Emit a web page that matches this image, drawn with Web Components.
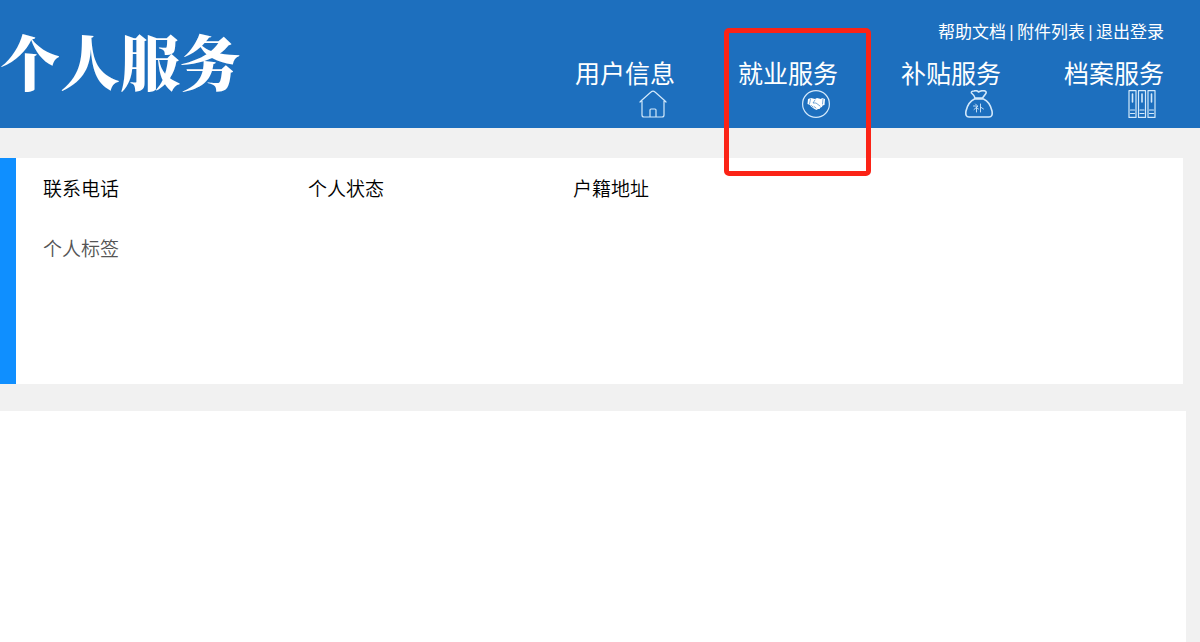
<!DOCTYPE html>
<html lang="zh-CN">
<head>
<meta charset="utf-8">
<meta name="viewport" content="width=device-width, initial-scale=1">
<title>个人服务</title>
<style>
body { margin: 0; background: #f1f1f1; color: #000; font-family: "Noto Sans CJK SC", sans-serif; }
</style>
</head>
<body>
<service-page>
  <service-header slot="header">
    <span slot="title">个人服务</span>
    <quick-links slot="links"></quick-links>
    <nav-item icon="home">用户信息</nav-item>
    <nav-item icon="hands" marked>就业服务</nav-item>
    <nav-item icon="bag">补贴服务</nav-item>
    <nav-item icon="files">档案服务</nav-item>
  </service-header>
  <profile-card>
    <profile-field>联系电话</profile-field>
    <profile-field>个人状态</profile-field>
    <profile-field>户籍地址</profile-field>
    <profile-field muted>个人标签</profile-field>
  </profile-card>
  <content-panel></content-panel>
</service-page>
<script>
function define(name, markup, setup) {
  const template = document.createElement('template');
  template.innerHTML = markup;
  customElements.define(name, class extends HTMLElement {
    constructor() {
      super();
      this.attachShadow({ mode: 'open' }).append(template.content.cloneNode(true));
    }
    connectedCallback() { if (setup) setup(this); }
  });
}

const icons = {
  home: '<path d="M1 12 L3 10 L12 2 Q14 0 16 2 L25 10 L27 12 M3 11 V25 Q3 27 5 27 H23 Q25 27 25 25 V11 M11 27 V20 Q11 19 12 19 H16 Q17 19 17 20 V27"/>',
  hands: '<circle cx="14" cy="14" r="13.4"/><path fill="#fff" stroke="none" d="M6 9 L9 8 L13 9 L15 8 L19 9 L20 8 L23 9 L22.5 15 L20.5 15.5 L20 17 L18.5 17.5 L17.5 19 L16 19 L14.5 20 L12.5 19 L11 18 L9 16.5 L8 15 L5.5 14 Z"/><path stroke="#1d6fbe" stroke-width=".6" d="M8.5 9 L7.5 14 M21 9 L20.5 14 M13 10 L11 13 L14 13 L18 16 M9.5 15.5 L11 17 M12 16.5 L14 18"/>',
  bag: '<path stroke-width="1.6" d="M10 8 Q9 5 6.5 3 Q6 1 9 1 Q12 0 13.5 2 Q17 0 20 1 Q22 2 20.5 4 L17.5 8 Z M9.5 9 H18.5 Q25 12 27 21 Q28 27 24 27 H4 Q0 27 1 21 Q3 12 9.5 9 Z"/><path stroke-width=".9" d="M10.5 14 L11.5 15 M8.5 16 H13 L9 19.5 M11.5 17 V22 M12 18 L13.5 19 M15.5 14 V22 M15.5 17 L18.5 19"/>',
  files: '<path d="M1 .6 H8 V27.4 H1 Z M10.5 .6 H17.5 V27.4 H10.5 Z M20 .6 H27 V27.4 H20 Z"/><path stroke-width="1.6" d="M4.5 4 V12 M14 4 V12 M23.5 4 V12"/><path d="M2.5 20 H6.5 M2.5 23.5 H6.5 M12 20 H16 M12 23.5 H16 M21.5 20 H25.5 M21.5 23.5 H25.5"/>'
};

define('service-page', `
  <style>
    :host { display: flex; flex-direction: column; min-height: 100vh; }
    main { display: flex; flex-direction: column; flex: 1; gap: 27px; padding-top: 30px; }
    ::slotted(content-panel) { flex: 1; }
  </style>
  <slot name="header"></slot>
  <main><slot></slot></main>`);

define('service-header', `
  <style>
    :host { display: block; background: #1d6fbe; color: #fff; }
    header { display: flex; align-items: flex-start; justify-content: space-between; padding: 19px 36px 10px 0; }
    h1 { margin: 0; font: 900 60px/82px "Noto Serif CJK SC", "Noto Sans CJK SC", serif; white-space: nowrap; }
    .side { display: flex; flex-direction: column; align-items: flex-end; gap: 15px; }
    nav { display: flex; gap: 63px; }
  </style>
  <header>
    <h1><slot name="title"></slot></h1>
    <div class="side"><slot name="links"></slot><nav><slot></slot></nav></div>
  </header>`);

define('quick-links', `
  <style>
    :host { display: flex; font-size: 17px; line-height: 24px; white-space: nowrap; }
    a { color: inherit; text-decoration: none; }
    span { width: 11px; text-align: center; font-family: "Noto Sans", sans-serif; }
  </style>
  <a href="#help">帮助文档</a><span>|</span><a href="#attachments">附件列表</a><span>|</span><a href="#logout">退出登录</a>`);

define('nav-item', `
  <style>
    :host { display: block; position: relative; }
    a { display: flex; flex-direction: column; gap: 4px; color: inherit; text-decoration: none; font-size: 25px; line-height: 28px; white-space: nowrap; }
    svg { display: block; align-self: flex-end; margin-right: 8px; width: 28px; height: 28px; fill: none; stroke: #d3e9fb; stroke-width: 1.2; stroke-linejoin: round; stroke-linecap: round; }
    :host([marked])::after { content: ""; position: absolute; inset: -30px -33px -58px -14px; box-sizing: border-box; border: 5px solid #fb2316; border-radius: 5px; pointer-events: none; }
  </style>
  <a href="#"><slot></slot><svg viewBox="0 0 28 28" aria-hidden="true"></svg></a>`,
  el => { el.shadowRoot.querySelector('svg').innerHTML = icons[el.getAttribute('icon')]; });

define('profile-card', `
  <style>
    :host { display: block; margin-right: 17px; background: #fff; border-left: 16px solid #0f8fff; }
    section { display: grid; grid-template-columns: repeat(4, 1fr); grid-auto-rows: 60px; align-content: start; min-height: 226px; padding: 0 80px 0 27px; box-sizing: border-box; }
    ::slotted([muted]) { grid-column: 1; }
  </style>
  <section><slot></slot></section>`);

define('profile-field', `
  <style>
    :host { display: block; font-size: 19px; line-height: 60px; font-weight: 350; white-space: nowrap; }
    :host([muted]) { color: #555; }
  </style>
  <slot></slot>`);

define('content-panel', `
  <style>:host { display: block; margin-right: 14px; background: #fff; }</style>
  <slot></slot>`);
</script>
</body>
</html>
